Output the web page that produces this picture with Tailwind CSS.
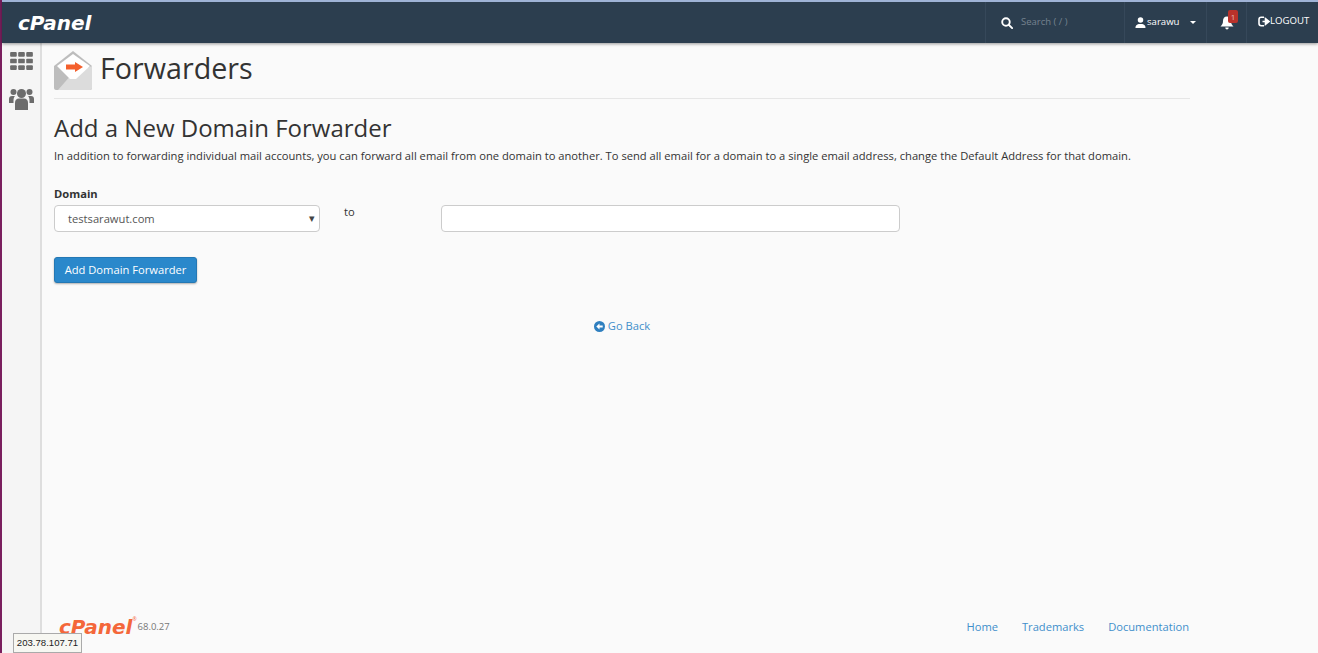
<!DOCTYPE html>
<html lang="en">
<head>
  <meta charset="UTF-8" />
  <title>Forwarders</title>
  <script src="https://cdn.jsdelivr.net/npm/@tailwindcss/browser@4"></script>
</head>
<body class="bg-[#fafafa] text-[#333] font-['Open_Sans',sans-serif] overflow-hidden">
  <div class="relative flex h-[653px] w-[1318px]">
    <!-- desktop edge -->
    <div class="w-[2px] shrink-0 bg-[#7a1f5e]"></div>

    <div class="flex min-w-0 flex-1 flex-col">
      <!-- top bar -->
      <header class="flex h-[43px] shrink-0 items-stretch border-t-2 border-[#9fb3d6] bg-[#2c3e4f] shadow-[0_1px_3px_rgba(0,0,0,0.4)] relative z-10 text-white">
        <div class="flex flex-1 items-center pl-[16px]">
          <span class="font-['DejaVu_Sans',sans-serif] text-[20px] leading-none font-bold italic text-white">cPanel</span>
        </div>
        <div class="flex w-[139px] items-center border-l border-[#36485a] pl-[15px]">
          <svg class="h-[12px] w-[12px]" viewBox="0 0 14 14" fill="none" stroke="white" stroke-width="2.2"><circle cx="5.8" cy="5.8" r="4.4"/><path d="M9 9l4 4" stroke-linecap="round"/></svg>
          <span class="ml-[8px] text-[9.5px] text-[#76838f]">Search ( / )</span>
        </div>
        <div class="flex w-[82px] items-center border-l border-[#36485a] pl-[10px]">
          <svg class="h-[11px] w-[11px]" viewBox="0 0 12 12" fill="white"><circle cx="6" cy="3.3" r="3"/><path d="M0.5 12c0-3 1.5-3.8 3.5-4.4h4c2 .6 3.500 1.400 3.500 4.400z"/></svg>
          <span class="ml-[1px] text-[9.6px] text-white">sarawu</span>
          <span class="ml-[11px] h-0 w-0 border-x-[3px] border-t-[3px] border-x-transparent border-t-white"></span>
        </div>
        <div class="relative flex w-[40px] items-center justify-center border-l border-[#36485a]">
          <svg class="h-[14px] w-[14px]" viewBox="0 0 14 13" fill="white"><path d="M7 0c2.800 0 4 2 4 4.500 0 2.500.8 3.800 2.500 5.500H.5C2.200 8.300 3 7 3 4.500 3 2 4.200 0 7 0zM5.300 11h3.400c0 1-.8 2-1.700 2s-1.700-1-1.700-2z"/></svg>
          <span class="absolute top-[8px] left-[21px] flex h-[13px] w-[10px] items-center justify-center rounded-[2px] bg-[#b9322b] text-[8px] text-[#e8b9b5]">1</span>
        </div>
        <div class="flex w-[72px] items-center border-l border-[#36485a] pb-[2px] pl-[11px]">
          <svg class="h-[11px] w-[12px]" viewBox="0 0 12 11" fill="none" stroke="white" stroke-width="1.600"><path d="M6 1.200H3.200C1.900 1.200 1 2.100 1 3.400v4.200c0 1.300.9 2.200 2.200 2.200H6"/><path d="M4.500 5.500h4M7.500 2.600l3.500 2.900-3.500 2.900z" fill="white"/></svg>
          <span class="text-[9.6px] text-white">LOGOUT</span>
        </div>
      </header>

      <div class="flex min-h-0 flex-1">
        <!-- side nav -->
        <nav class="flex w-[40px] shrink-0 flex-col items-center border-r-2 border-[#dedede] bg-[#f5f5f5] pt-[9px]">
          <svg class="h-[18px] w-[23px]" viewBox="0 0 24 19" fill="#6c6c6c">
            <rect x="0" y="0" width="7" height="5" rx="1"/><rect x="8.500" y="0" width="7" height="5" rx="1"/><rect x="17" y="0" width="7" height="5" rx="1"/>
            <rect x="0" y="7" width="7" height="5" rx="1"/><rect x="8.500" y="7" width="7" height="5" rx="1"/><rect x="17" y="7" width="7" height="5" rx="1"/>
            <rect x="0" y="14" width="7" height="5" rx="1"/><rect x="8.500" y="14" width="7" height="5" rx="1"/><rect x="17" y="14" width="7" height="5" rx="1"/>
          </svg>
          <svg class="mt-[18px] h-[22px] w-[25px]" viewBox="0 0 25 22" fill="#6c6c6c">
            <circle cx="4.500" cy="4" r="3"/><circle cx="20.500" cy="4" r="3"/><circle cx="12.500" cy="5.500" r="4.500"/>
            <path d="M0 15v-4c0-2 1-3 3-3h3c-1 1-1.500 2.500-1.500 4.500V15zM25 15v-4c0-2-1-3-3-3h-3c1 1 1.500 2.500 1.500 4.500V15z"/>
            <path d="M6 22v-7c0-3 1.500-4.500 4-4.500h5c2.500 0 4 1.500 4 4.500v7z"/>
          </svg>
        </nav>

        <!-- main content -->
        <main class="flex min-w-0 flex-1 flex-col pl-[12px] pr-[128px]">
          <div class="flex h-[56px] items-start gap-[8px] border-b border-[#e6e6e6] pt-[8px]">
            <svg class="h-[39px] w-[38px] shrink-0" viewBox="0 0 38 39">
              <path d="M0 15L19 0l19 15v22c0 1-1 2-2 2H2c-1 0-2-1-2-2z" fill="#bdbdbd"/>
              <path d="M38 15v22c0 1-1 2-2 2H4l14-16z" fill="#dcdcdc"/>
              <path d="M19 3L36 15 22 28 16 28 3 15z" fill="#ffffff"/>
              <path d="M12 13.500h9V11l8 5-8 5v-2.500h-9z" fill="#f4602d"/>
            </svg>
            <h1 class="-mt-[1px] text-[28.7px] leading-[36px] font-normal text-[#333]">Forwarders</h1>
          </div>

          <h2 class="mt-[13px] text-[24px] leading-[32px] font-normal text-[#333]">Add a New Domain Forwarder</h2>
          <p class="mt-[4px] text-[11.18px] leading-[16px] text-[#333]">In addition to forwarding individual mail accounts, you can forward all email from one domain to another. To send all email for a domain to a single email address, change the Default Address for that domain.</p>

          <form class="mt-[22px] flex items-start">
            <div class="w-[266px]">
              <label class="block text-[11.18px] leading-[16px] font-bold text-[#333]">Domain</label>
              <div class="mt-[3px] flex h-[27px] items-center justify-between rounded-[4px] border border-[#ccc] bg-white pr-[4px] pl-[13px] text-[11.18px] text-[#555]">
                <span class="pt-[1px]">testsarawut.com</span>
                <span class="text-[11px] text-[#444]">▾</span>
              </div>
            </div>
            <span class="mt-[18px] ml-[24px] w-[97px] text-[11.18px] leading-[16px] text-[#333]">to</span>
            <input class="mt-[19px] h-[27px] w-[459px] rounded-[4px] border border-[#ccc] bg-white" type="text" />
          </form>

          <div class="mt-[24px]">
            <button class="h-[26px] w-[143px] rounded-[3px] border border-[#2478b4] bg-[#2a88cb] text-[11.18px] text-white shadow-[0_1px_2px_rgba(0,0,0,0.3)]">Add Domain Forwarder</button>
          </div>

          <div class="mt-[35px] flex items-center justify-center text-[11.18px] text-[#3f8fcb]">
            <svg class="mr-[3px] h-[11px] w-[11px]" viewBox="0 0 12 12"><circle cx="6" cy="6" r="6" fill="#2f7fbf"/><path d="M2.500 6L6 2.800V5h3.500v2H6v2.200z" fill="white"/></svg>
            <a href="#">Go Back</a>
          </div>

          <footer class="mt-auto flex h-[44px] items-start pt-[7px]">
            <span class="ml-[5px] font-['DejaVu_Sans',sans-serif] text-[20px] leading-[22px] font-bold italic text-[#f4673a]">cPanel</span>
            <span class="-mt-[1px] text-[5px] leading-[8px] text-[#f4673a]">®</span>
            <span class="mt-[3px] ml-[1px] text-[9.5px] leading-[16px] text-[#777]">68.0.27</span>
            <div class="ml-auto flex gap-[24px] pt-[3px] pr-[1px] text-[11.15px] leading-[16px] text-[#3f8fcb]">
              <a href="#">Home</a><a href="#">Trademarks</a><a href="#">Documentation</a>
            </div>
          </footer>
        </main>
      </div>
    </div>

    <!-- status tooltip -->
    <div class="absolute bottom-0 left-[13px] z-20 flex h-[20px] w-[69px] items-center justify-center border border-[#aaa] bg-[#f7f7f2] font-['Liberation_Sans',sans-serif] text-[9.6px] text-[#222]">203.78.107.71</div>
  </div>
</body>
</html>
